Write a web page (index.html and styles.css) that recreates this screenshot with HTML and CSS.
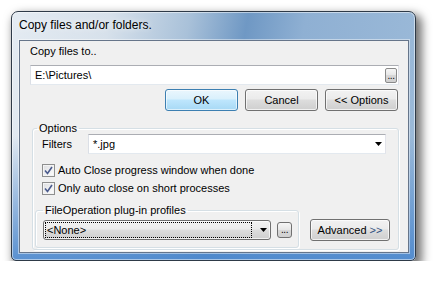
FILE: index.html
```html
<!DOCTYPE html>
<html lang="en">
<head>
    <meta charset="UTF-8">
    <title>Copy files and/or folders.</title>
    <link rel="stylesheet" href="styles.css">
</head>
<body>
    <div class="window">
        <div class="titlebar">Copy files and/or folders.</div>
        <div class="client">
            <div class="caption">Copy files to..</div>
            <div class="path">
                <span class="path-text">E:\Pictures\</span>
                <span class="browse">...</span>
            </div>
            <div class="actions">
                <button class="btn btn-default">OK</button>
                <button class="btn">Cancel</button>
                <button class="btn">&lt;&lt; Options</button>
            </div>
            <fieldset class="group options">
                <legend>Options</legend>
                <div class="filter-row">
                    <label>Filters</label>
                    <div class="combo">
                        <span>*.jpg</span>
                        <svg class="arrow" width="7" height="4" viewBox="0 0 7 4"><polygon points="0,0 7,0 3.5,4" fill="#000"/></svg>
                    </div>
                </div>
                <div class="check-row first">
                    <span class="checkbox"><svg width="9" height="9" viewBox="0 0 9 9"><path d="M1 4.5 L3.5 7.5 L8 1" fill="none" stroke="#4a5a8c" stroke-width="1.6"/></svg></span>
                    <span>Auto Close progress window when done</span>
                </div>
                <div class="check-row">
                    <span class="checkbox"><svg width="9" height="9" viewBox="0 0 9 9"><path d="M1 4.5 L3.5 7.5 L8 1" fill="none" stroke="#4a5a8c" stroke-width="1.6"/></svg></span>
                    <span>Only auto close on short processes</span>
                </div>
                <div class="profile-row">
                    <fieldset class="group profiles">
                        <legend>FileOperation plug-in profiles</legend>
                        <div class="profile-controls">
                            <div class="dropdown">
                                <span class="focus">&lt;None&gt;</span>
                                <svg class="arrow" width="7" height="4" viewBox="0 0 7 4"><polygon points="0,0 7,0 3.5,4" fill="#000"/></svg>
                            </div>
                            <span class="browse small">...</span>
                        </div>
                    </fieldset>
                    <button class="btn advanced">Advanced <span class="chevrons">&gt;&gt;</span></button>
                </div>
            </fieldset>
        </div>
    </div>
</body>
</html>
```
FILE: styles.css
```css
* {
    box-sizing: border-box;
}
body {
    margin: 0;
    background: #fff;
    font-family: 'Liberation Sans', Arial, sans-serif;
    font-size: 11px;
    color: #000;
}
.window {
    margin: 11px 0 0 11px;
    width: 405px;
    height: 250px;
    padding: 0 6px 0 7px;
    border: 1px solid #2e3a48;
    border-radius: 7px 7px 5px 5px;
    background:
        linear-gradient(to bottom, transparent 50%, rgba(75, 135, 205, 0.9) 100%),
        linear-gradient(100deg, #e4ebf2 0%, #d7e1eb 22%, #a9c1d9 40%, #6f98c4 53%, #8fb0d3 66%, #9dbbd9 100%);
    box-shadow: 4px 5px 10px 2px rgba(0, 0, 0, 0.55), inset 0 0 0 1px rgba(255, 255, 255, 0.5);
}
.titlebar {
    height: 28px;
    padding-top: 5px;
    font-size: 12px;
    line-height: 16px;
    text-shadow: 0 0 6px rgba(255, 255, 255, 0.9);
}
.client {
    height: 213px;
    padding: 0 10px;
    background: #f0f0f0;
    border: 1px solid #66758a;
    box-shadow: 0 0 0 1px rgba(255, 255, 255, 0.45);
}
.caption {
    margin-top: 3px;
    line-height: 15px;
}
.path {
    margin-top: 6px;
    width: 369px;
    height: 20px;
    padding: 0 1px 0 4px;
    display: flex;
    align-items: center;
    justify-content: space-between;
    background: #fff;
    border: 1px solid;
    border-color: #abadb3 #e2e3ea #e3e9ef #dbdfe6;
}
.browse {
    width: 12px;
    height: 15px;
    padding-bottom: 2px;
    display: flex;
    align-items: flex-end;
    justify-content: center;
    border: 1px solid #8a8a8a;
    border-radius: 2px;
    background: linear-gradient(#f6f6f6, #e6e6e6 50%, #d8d8d8 50%, #d0d0d0);
    font-size: 10px;
    line-height: 8px;
    letter-spacing: -0.5px;
}
.browse.small {
    width: 15px;
    height: 16px;
    border-color: #707070;
    border-radius: 3px;
    padding-bottom: 3px;
}
.actions {
    margin-top: 4px;
    display: flex;
    justify-content: flex-end;
    gap: 7px;
}
.btn {
    width: 73px;
    height: 22px;
    padding: 0;
    font: inherit;
    color: #000;
    border: 1px solid #707070;
    border-radius: 3px;
    background: linear-gradient(#f2f2f2, #ebebeb 45%, #dddddd 50%, #cfcfcf);
    box-shadow: inset 0 0 0 1px rgba(255, 255, 255, 0.7);
}
.btn-default {
    border-color: #3c7fb1;
    background: linear-gradient(#eaf6fd, #d9f0fc 45%, #bee6fd 50%, #a7d9f5);
    box-shadow: inset 0 0 0 1px rgba(255, 255, 255, 0.6);
}
.group {
    margin: 0;
    min-width: 0;
    border: 1px solid #d5dfe5;
    border-radius: 3px;
    box-shadow: inset 1px 1px 0 #fff, 1px 1px 0 #fff;
}
.group legend {
    padding: 0 2px;
    line-height: 14px;
}
.options {
    margin: 10px 0 0 2px;
    width: 367px;
    padding: 0 8px 1px 9px;
}
.options > legend {
    margin-left: -5px;
}
.filter-row {
    margin-top: -1px;
    height: 20px;
    display: flex;
    align-items: center;
}
.filter-row label {
    width: 46px;
}
.combo {
    width: 298px;
    height: 20px;
    padding: 0 3px 0 4px;
    display: flex;
    align-items: center;
    justify-content: space-between;
    background: #fff;
    border: 1px solid;
    border-color: #abadb3 #e2e3ea #e3e9ef #dbdfe6;
}
.arrow {
    display: block;
}
.check-row {
    height: 18px;
    display: flex;
    align-items: center;
    gap: 3px;
}
.check-row.first {
    margin-top: 7px;
}
.checkbox {
    width: 13px;
    height: 13px;
    display: flex;
    align-items: center;
    justify-content: center;
    border: 1px solid #8e8f8f;
    background: linear-gradient(135deg, #dcdde0, #ffffff);
    box-shadow: inset 0 0 0 1px #f4f4f4;
}
.profile-row {
    margin-top: 6px;
    display: flex;
    align-items: flex-end;
}
.profiles {
    margin-left: -7px;
    width: 264px;
    padding: 3px 0 7px 7px;
}
.profile-controls {
    display: flex;
    align-items: center;
    gap: 6px;
}
.dropdown {
    width: 228px;
    height: 20px;
    padding: 0 3px 0 1px;
    display: flex;
    align-items: center;
    justify-content: space-between;
    border: 1px solid #707070;
    border-radius: 3px;
    background: linear-gradient(#f2f2f2, #ebebeb 45%, #dddddd 50%, #cfcfcf);
    box-shadow: inset 0 0 0 1px rgba(255, 255, 255, 0.7);
}
.focus {
    width: 207px;
    height: 16px;
    padding-left: 1px;
    line-height: 14px;
    border: 1px dotted #000;
}
.advanced {
    width: 80px;
    margin: 0 0 7px 11px;
}
.chevrons {
    color: #2f4f80;
}
```
